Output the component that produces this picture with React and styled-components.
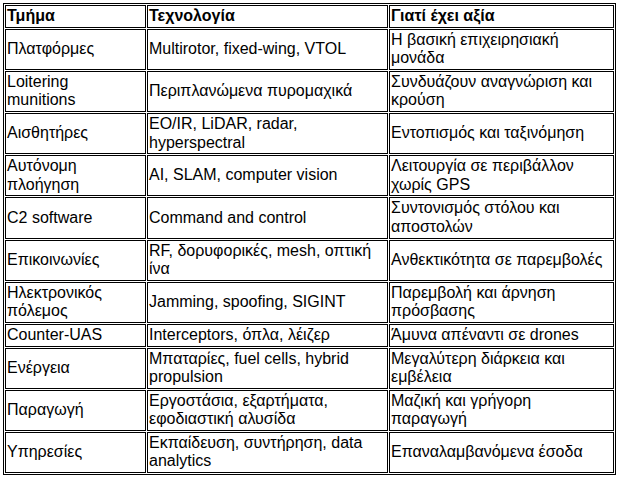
import React from 'react';
import styled, { createGlobalStyle } from 'styled-components';

const GlobalStyle = createGlobalStyle`
  html, body {
    margin: 0;
    padding: 0;
    background: #fff;
  }
  body {
    padding: 3px;
    font-family: "Liberation Sans", Arial, sans-serif;
  }
`

const Table = styled.table`
  width: 613px;
  box-sizing: border-box;
  table-layout: fixed;
  border: 1px solid #000;
  border-collapse: separate;
  border-spacing: 1px;
  font-size: 16px;
  line-height: 18.6px;
  color: #000;
`

const Cell = styled.td`
  box-sizing: border-box;
  border: 1px solid #000;
  padding: 1px 4px 1px 1px;
  vertical-align: middle;
  text-align: left;
  font-weight: ${props => (props.$head ? 'bold' : 'normal')};
`

const widths = [141, 241, 225];

const header = ['Τμήμα', 'Τεχνολογία', 'Γιατί έχει αξία'];

const rows = [
  ['Πλατφόρμες', 'Multirotor, fixed-wing, VTOL', 'Η βασική επιχειρησιακή μονάδα'],
  ['Loitering munitions', 'Περιπλανώμενα πυρομαχικά', 'Συνδυάζουν αναγνώριση και κρούση'],
  ['Αισθητήρες', 'EO/IR, LiDAR, radar, hyperspectral', 'Εντοπισμός και ταξινόμηση'],
  ['Αυτόνομη πλοήγηση', 'AI, SLAM, computer vision', 'Λειτουργία σε περιβάλλον χωρίς GPS'],
  ['C2 software', 'Command and control', 'Συντονισμός στόλου και αποστολών'],
  ['Επικοινωνίες', 'RF, δορυφορικές, mesh, οπτική ίνα', 'Ανθεκτικότητα σε παρεμβολές'],
  ['Ηλεκτρονικός πόλεμος', 'Jamming, spoofing, SIGINT', 'Παρεμβολή και άρνηση πρόσβασης'],
  ['Counter-UAS', 'Interceptors, όπλα, λέιζερ', 'Άμυνα απέναντι σε drones'],
  ['Ενέργεια', 'Μπαταρίες, fuel cells, hybrid propulsion', 'Μεγαλύτερη διάρκεια και εμβέλεια'],
  ['Παραγωγή', 'Εργοστάσια, εξαρτήματα, εφοδιαστική αλυσίδα', 'Μαζική και γρήγορη παραγωγή'],
  ['Υπηρεσίες', 'Εκπαίδευση, συντήρηση, data analytics', 'Επαναλαμβανόμενα έσοδα'],
];

export default function App() {
  return (
    <>
      <GlobalStyle />
      <Table>
        <colgroup>
          {widths.map((w, i) => (
            <col key={i} style={{ width: w }} />
          ))}
        </colgroup>
        <tbody>
          <tr>
            {header.map(h => (
              <Cell key={h} $head>{h}</Cell>
            ))}
          </tr>
          {rows.map(r => (
            <tr key={r[0]}>
              {r.map((c, i) => (
                <Cell key={i}>{c}</Cell>
              ))}
            </tr>
          ))}
        </tbody>
      </Table>
    </>
  );
}
